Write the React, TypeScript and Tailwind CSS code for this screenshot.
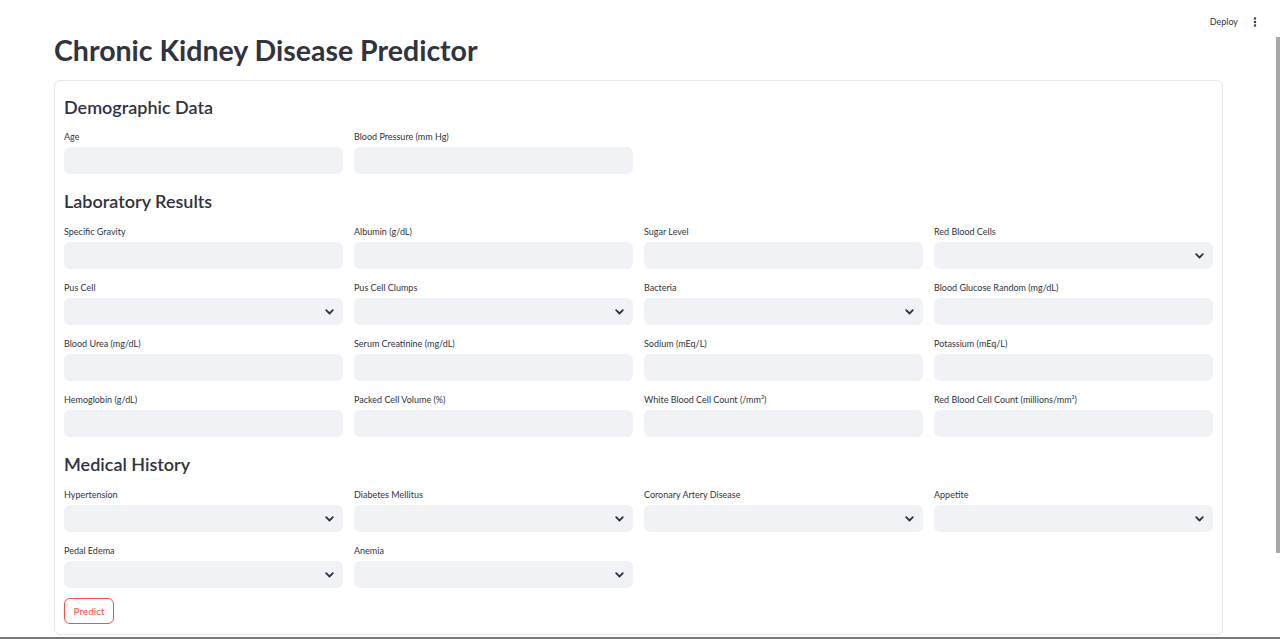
import { MoreVertical } from 'lucide-react';

type Field = { label: string; select?: boolean };

const demographic: Field[] = [{ label: 'Age' }, { label: 'Blood Pressure (mm Hg)' }];

const laboratory: Field[] = [
  { label: 'Specific Gravity' },
  { label: 'Albumin (g/dL)' },
  { label: 'Sugar Level' },
  { label: 'Red Blood Cells', select: true },
  { label: 'Pus Cell', select: true },
  { label: 'Pus Cell Clumps', select: true },
  { label: 'Bacteria', select: true },
  { label: 'Blood Glucose Random (mg/dL)' },
  { label: 'Blood Urea (mg/dL)' },
  { label: 'Serum Creatinine (mg/dL)' },
  { label: 'Sodium (mEq/L)' },
  { label: 'Potassium (mEq/L)' },
  { label: 'Hemoglobin (g/dL)' },
  { label: 'Packed Cell Volume (%)' },
  { label: 'White Blood Cell Count (/mm³)' },
  { label: 'Red Blood Cell Count (millions/mm³)' },
];

const history: Field[] = [
  { label: 'Hypertension', select: true },
  { label: 'Diabetes Mellitus', select: true },
  { label: 'Coronary Artery Disease', select: true },
  { label: 'Appetite', select: true },
  { label: 'Pedal Edema', select: true },
  { label: 'Anemia', select: true },
];

const Chevron = () => (
  <svg width="9" height="6" viewBox="0 0 9 6" className="text-[#31333f]">
    <path d="M1.2 1.2 L4.5 4.5 L7.8 1.2" fill="none" stroke="currentColor" strokeWidth="1.8" strokeLinecap="round" strokeLinejoin="round" />
  </svg>
);

const FieldBox = ({ field }: { field: Field }) => (
  <div className="flex flex-col">
    <label className="h-[16px] text-[9px] leading-[12px] text-[#31333f]">{field.label}</label>
    <div className="flex h-[27px] items-center justify-end rounded-[6px] bg-[#f0f2f6] pr-[9px]">
      {field.select && <Chevron />}
    </div>
  </div>
);

const Section = ({ title, fields, first }: { title: string; fields: Field[]; first?: boolean }) => (
  <div className={first ? '' : 'mt-[15px]'}>
    <h2 className="h-[24px] text-[18px] font-semibold leading-[24px] text-[#31333f]">{title}</h2>
    <div className={`grid grid-cols-4 gap-x-[11px] gap-y-[13px] ${first ? 'mt-[12px]' : 'mt-[13px]'}`}>
      {fields.map((f) => (
        <FieldBox key={f.label} field={f} />
      ))}
    </div>
  </div>
);

export default function App() {
  return (
    <div className="relative h-[639px] overflow-hidden bg-white" style={{ fontFamily: 'Lato, "Noto Sans", sans-serif' }}>
      {/* top bar */}
      <div className="flex h-[40px] items-center justify-end gap-[11px] pr-[19px] pt-[3px]">
        <span className="text-[9px] text-[#31333f]">Deploy</span>
        <MoreVertical className="h-[12px] w-[12px] text-[#31333f]" strokeWidth={3} />
      </div>

      <div className="pl-[54px] pr-[57px]">
        <h1 className="-mt-[7px] h-[34px] text-[28.5px] font-bold leading-[34px] text-[#31333f]">
          Chronic Kidney Disease Predictor
        </h1>

        <div className="mt-[13px] rounded-[6px] border border-[#e6e8ec] px-[9px] pb-[10px] pt-[14px]">
          <Section title="Demographic Data" fields={demographic} first />
          <Section title="Laboratory Results" fields={laboratory} />
          <Section title="Medical History" fields={history} />
          <button className="mt-[10px] h-[26px] w-[50px] rounded-[6px] border border-[#ff4b4b] bg-white text-[10px] text-[#ff4b4b]">
            Predict
          </button>
        </div>
      </div>

      {/* scrollbar thumb */}
      <div className="absolute right-0 top-[37px] h-[516px] w-[4px] bg-[#a8a8a8]" />
      {/* bottom edge */}
      <div className="absolute bottom-0 left-0 h-[2px] w-full bg-[#7a7a7a]" />
    </div>
  );
}
